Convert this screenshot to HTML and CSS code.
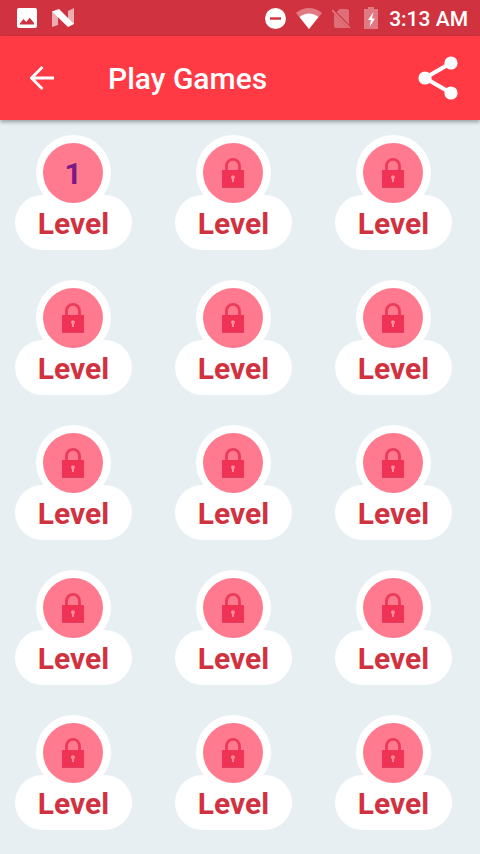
FILE: index.html
```html
<!DOCTYPE html>
<html lang="en">
<head>
  <meta charset="UTF-8">
  <meta name="viewport" content="width=device-width, initial-scale=1.0">
  <title>Play Games</title>
  <link rel="stylesheet" href="styles.css">
</head>
<body>
  <!-- Lock icon shared by all locked levels -->
  <svg class="sprite" aria-hidden="true">
    <symbol id="lock" viewBox="0 0 22 30">
      <path d="M4.5 13V7.9a6.5 6.5 0 0 1 13 0V13" fill="none" stroke="#ee3a5a" stroke-width="2.8"/>
      <path d="M0 12h22v18H0z" fill="#f03355"/>
      <path d="M0 29h22v1H0z" fill="#e0405f"/>
      <path d="M11 17.2a2.1 2.1 0 0 1 1 3.9V24h-2v-2.9a2.1 2.1 0 0 1 1-3.9z" fill="#ff8a9c"/>
    </symbol>
  </svg>

  <div class="status-bar">
    <div class="status-left">
      <svg width="20" height="20" viewBox="0 0 20 20">
        <path fill="#fff" fill-rule="evenodd" d="M2 0h16a2 2 0 0 1 2 2v16a2 2 0 0 1-2 2H2a2 2 0 0 1-2-2V2a2 2 0 0 1 2-2zM3 16.5h14v-1.5l-4.3-5.3-3.5 4.3-2.7-3L3 15.2z"/>
      </svg>
      <svg width="22" height="20" viewBox="0 0 22 20">
        <path fill="#fff" fill-opacity=".6" d="M0 3l6 3v11L0 19zM16 3l6-3v16l-6-3z"/>
        <path fill="#fff" d="M0 3.5L7 1l15 15-6 3z"/>
      </svg>
    </div>
    <div class="status-right">
      <svg width="21" height="21" viewBox="0 0 21 21">
        <circle cx="10.5" cy="10.5" r="10.5" fill="#fff"/>
        <path d="M5 9.3h11v2.4H5z" fill="#d0323f"/>
      </svg>
      <svg width="26" height="21" viewBox="0 0 26 21">
        <path fill="#fff" fill-opacity=".35" d="M13 21L0 5Q6 0 13 0t13 5z"/>
        <path fill="#fff" d="M13 21L3.500 9Q8 5.500 13 5.500T22.500 9z"/>
      </svg>
      <svg width="20" height="21" viewBox="0 0 20 21">
        <path fill="#fff" fill-opacity=".3" d="M7.500 1H15q2 0 2 2v13.500L4.700 4zM2 5.500l14.500 14.500H4q-2 0-2-2z"/>
        <path d="M0 2l18 18" stroke="#fff" stroke-opacity=".35" stroke-width="1.6"/>
      </svg>
      <svg class="battery" width="14" height="22" viewBox="0 0 14 22">
        <path fill="#fff" fill-opacity=".35" d="M4 0h6v2h4v20H0V2h4z"/>
        <path fill="#fff" d="M9.500 5L4 13h3l-1.500 7L11 11.500H8z"/>
      </svg>
      <span class="time">3:13 AM</span>
    </div>
  </div>

  <header class="app-bar">
    <button class="icon-btn" aria-label="Back">
      <svg width="24" height="24" viewBox="0 0 24 24">
        <path d="M24 12H2M12.500 1L1.500 12l11 11" fill="none" stroke="#fff" stroke-width="2.800"/>
      </svg>
    </button>
    <h1>Play Games</h1>
    <button class="icon-btn share" aria-label="Share">
      <svg width="40" height="44" viewBox="0 0 40 44">
        <path d="M33 7L7 22l26 15" fill="none" stroke="#fff" stroke-width="4.200"/>
        <g fill="#fff">
          <circle cx="33" cy="7" r="6.600"/>
          <circle cx="7" cy="22" r="6.600"/>
          <circle cx="33" cy="37" r="6.600"/>
        </g>
      </svg>
    </button>
  </header>

  <main class="levels">
    <button class="level"><span class="badge">1</span><span class="label">Level</span></button>
    <button class="level"><span class="badge"><svg class="lock"><use href="#lock"/></svg></span><span class="label">Level</span></button>
    <button class="level"><span class="badge"><svg class="lock"><use href="#lock"/></svg></span><span class="label">Level</span></button>

    <button class="level"><span class="badge"><svg class="lock"><use href="#lock"/></svg></span><span class="label">Level</span></button>
    <button class="level"><span class="badge"><svg class="lock"><use href="#lock"/></svg></span><span class="label">Level</span></button>
    <button class="level"><span class="badge"><svg class="lock"><use href="#lock"/></svg></span><span class="label">Level</span></button>

    <button class="level"><span class="badge"><svg class="lock"><use href="#lock"/></svg></span><span class="label">Level</span></button>
    <button class="level"><span class="badge"><svg class="lock"><use href="#lock"/></svg></span><span class="label">Level</span></button>
    <button class="level"><span class="badge"><svg class="lock"><use href="#lock"/></svg></span><span class="label">Level</span></button>

    <button class="level"><span class="badge"><svg class="lock"><use href="#lock"/></svg></span><span class="label">Level</span></button>
    <button class="level"><span class="badge"><svg class="lock"><use href="#lock"/></svg></span><span class="label">Level</span></button>
    <button class="level"><span class="badge"><svg class="lock"><use href="#lock"/></svg></span><span class="label">Level</span></button>

    <button class="level"><span class="badge"><svg class="lock"><use href="#lock"/></svg></span><span class="label">Level</span></button>
    <button class="level"><span class="badge"><svg class="lock"><use href="#lock"/></svg></span><span class="label">Level</span></button>
    <button class="level"><span class="badge"><svg class="lock"><use href="#lock"/></svg></span><span class="label">Level</span></button>
  </main>
</body>
</html>
```
FILE: styles.css
```css
* {
  box-sizing: border-box;
}
body {
  margin: 0;
  min-height: 100vh;
  background-color: #e7eff3;
  font-family: Roboto, "Liberation Sans", sans-serif;
}
svg {
  display: block;
}
button {
  padding: 0;
  border: none;
  background: none;
  font-family: inherit;
  cursor: pointer;
}
.sprite {
  display: none;
}
.status-bar {
  display: flex;
  justify-content: space-between;
  align-items: center;
  height: 36px;
  padding: 0 12px 0 17px;
  background-color: #d0323f;
  color: #fff;
}
.status-left {
  display: flex;
  align-items: center;
  gap: 15px;
}
.status-right {
  display: flex;
  align-items: center;
  gap: 10px;
}
.battery {
  margin: 0 1px 0 2px;
}
.time {
  padding-top: 2px;
  font-size: 21px;
  font-weight: 500;
  line-height: 24px;
}
.app-bar {
  display: flex;
  align-items: center;
  height: 84px;
  padding: 0 22px 0 30px;
  background-color: #ff3a45;
  box-shadow: 0 2px 4px rgba(0, 0, 0, 0.35);
}
.app-bar h1 {
  margin: 0 0 0 54px;
  padding-top: 2px;
  color: #fff;
  font-size: 30px;
  font-weight: 500;
  line-height: 36px;
}
.share {
  margin-left: auto;
}
.levels {
  display: grid;
  grid-template-columns: repeat(3, 1fr);
  row-gap: 30px;
  padding: 15px 0 24px;
}
.level {
  display: flex;
  flex-direction: column;
  align-items: center;
  width: 117px;
  margin-left: 15px;
}
/* sits over the top edge of the label */
.badge {
  z-index: 1;
  display: flex;
  justify-content: center;
  align-items: center;
  width: 75px;
  height: 75px;
  border: solid #fff;
  border-width: 8px 8px 7px 7px;
  border-radius: 50%;
  background-color: #ff7a8e;
  color: #7b1a87;
  font-size: 30px;
  font-weight: 700;
}
.lock {
  width: 22px;
  height: 30px;
}
.label {
  width: 100%;
  margin-top: -15px;
  padding-top: 2px;
  border-radius: 28px;
  background-color: #fff;
  color: #d0323f;
  font-size: 30px;
  font-weight: 700;
  line-height: 53px;
}
```
